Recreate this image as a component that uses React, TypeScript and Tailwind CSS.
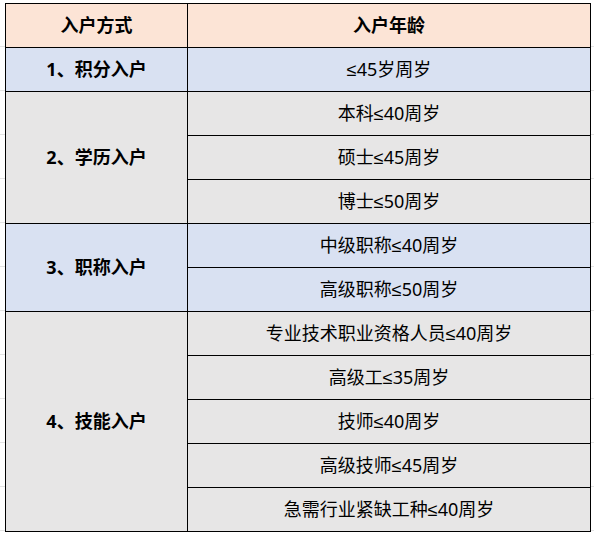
const rows = [
  { method: "1、积分入户", bg: "bg-[#d9e1f2]", ages: ["≤45岁周岁"] },
  {
    method: "2、学历入户",
    bg: "bg-[#e7e6e6]",
    ages: ["本科≤40周岁", "硕士≤45周岁", "博士≤50周岁"],
  },
  {
    method: "3、职称入户",
    bg: "bg-[#d9e1f2]",
    ages: ["中级职称≤40周岁", "高级职称≤50周岁"],
  },
  {
    method: "4、技能入户",
    bg: "bg-[#e7e6e6]",
    ages: [
      "专业技术职业资格人员≤40周岁",
      "高级工≤35周岁",
      "技师≤40周岁",
      "高级技师≤45周岁",
      "急需行业紧缺工种≤40周岁",
    ],
  },
];

// faint spreadsheet grid lines around the table
function Margin({ className }: { className: string }) {
  const lines = Array.from({ length: 12 });
  return (
    <div className={`flex flex-col ${className}`}>
      {lines.map((_, i) => (
        <div key={i} className="h-[44px] border-b border-[#e3e3e3]" />
      ))}
    </div>
  );
}

export default function App() {
  return (
    <div
      className="w-[594px] h-[535px] bg-white text-black overflow-hidden"
      style={{
        fontFamily:
          '"Noto Sans", "Liberation Sans", "Noto Sans CJK SC", sans-serif',
      }}
    >
      <div className="h-[3px]" />
      <div className="flex">
        <Margin className="w-[5px]" />
        <table className="border-collapse w-[586px] table-fixed text-[18px] leading-none">
          <colgroup>
            <col className="w-[182px]" />
            <col />
          </colgroup>
          <thead>
            <tr className="h-[44px] bg-[#fce4d6]">
              <th className="border border-black font-bold pb-[2px]">入户方式</th>
              <th className="border border-black font-bold pb-[2px]">入户年龄</th>
            </tr>
          </thead>
          <tbody>
            {rows.map((group) =>
              group.ages.map((age, i) => (
                <tr key={age} className={`h-[44px] ${group.bg}`}>
                  {i === 0 && (
                    <td
                      rowSpan={group.ages.length}
                      className="border border-black text-center font-bold pb-[2px]"
                    >
                      {group.method}
                    </td>
                  )}
                  <td className="border border-black text-center pb-[2px]">
                    {age}
                  </td>
                </tr>
              ))
            )}
          </tbody>
        </table>
        <Margin className="flex-1" />
      </div>
    </div>
  );
}
